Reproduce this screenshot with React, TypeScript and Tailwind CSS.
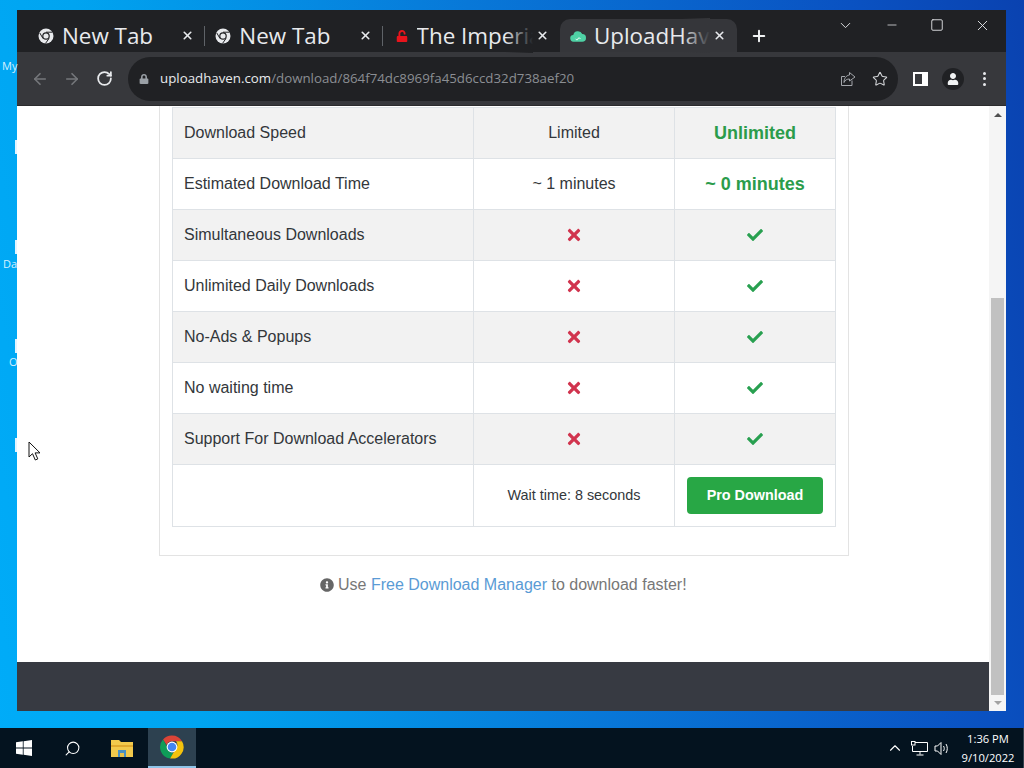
import React from 'react';
import { ArrowLeft, ArrowRight, RotateCw, Star, Plus, X, Minus, Square, ChevronDown, ChevronUp, Search } from 'lucide-react';
import { FaTimes, FaCheck, FaInfoCircle, FaLock, FaUnlock, FaUser } from 'react-icons/fa';

const rows = [
    'Simultaneous Downloads',
    'Unlimited Daily Downloads',
    'No-Ads & Popups',
    'No waiting time',
    'Support For Download Accelerators',
];

function ChromeGlyph() {
    return (
        <svg width="16" height="16" viewBox="0 0 16 16" className="shrink-0">
            <circle cx="8" cy="8" r="7.5" fill="#e8eaed" />
            <circle cx="8" cy="8" r="3.8" fill="#202124" />
            <circle cx="8" cy="8" r="2.6" fill="#e8eaed" />
            <path d="M8 4.2h6.4M5 10.5 1.8 5M11 10.5 7.5 15.4" stroke="#202124" strokeWidth="1" />
        </svg>
    );
}

function ChromeLogo() {
    return (
        <svg width="24" height="24" viewBox="0 0 24 24">
            <path d="M12 0.5a11.5 11.5 0 0 1 10 5.8H12a5.8 5.8 0 0 0-5.4 3.6L3 4.6A11.5 11.5 0 0 1 12 0.5Z" fill="#db4437" />
            <path d="M3 4.6l4 6.9a5.8 5.8 0 0 0 6.5 6.2l-3.4 5.9A11.5 11.5 0 0 1 3 4.6Z" fill="#0f9d58" />
            <path d="M22 6.300a11.500 11.500 0 0 1-11.900 17.100l5-8.700A5.800 5.800 0 0 0 16 6.300Z" fill="#f4c20d" />
            <circle cx="12" cy="12" r="5.400" fill="#fff" />
            <circle cx="12" cy="12" r="4.300" fill="#4285f4" />
        </svg>
    );
}

function Tab({ title, icon, active, divider }: { title: string; icon: React.ReactNode; active?: boolean; divider?: boolean }) {
    return (
        <div className={`relative w-[177.3px] h-[33px] shrink-0 flex items-center pl-[10px] pr-[11px] ${active ? 'bg-[#35363a] rounded-t-[10px]' : ''}`}>
            <span className="w-[16px] flex justify-center shrink-0">{icon}</span>
            <div className="relative ml-[8px] w-[116px] overflow-hidden whitespace-nowrap font-['Open_Sans',sans-serif] text-[22.4px] leading-[35px] text-[#e8eaed]">
                {title}
                {title.length > 7 && (
                    <div className={`absolute right-0 top-0 h-full w-[28px] bg-gradient-to-r from-transparent ${active ? 'to-[#35363a]' : 'to-[#202124]'}`} />
                )}
            </div>
            <X size={13} strokeWidth={3} color="#e8eaed" className="ml-auto shrink-0" />
            {divider && <div className="absolute right-0 top-[7px] h-[20px] w-px bg-[#5f6368]" />}
        </div>
    );
}

function TabStrip() {
    return (
        <div className="h-[42px] bg-[#202124] flex items-end pl-[11px] shrink-0">
            <Tab title="New Tab" icon={<ChromeGlyph />} divider />
            <Tab title="New Tab" icon={<ChromeGlyph />} divider />
            <Tab title="The Imperial" icon={<FaUnlock size={12} color="#e8141c" className="ml-[3px]" />} />
            <Tab
                title="UploadHaven"
                active
                icon={
                    <svg width="17" height="14" viewBox="0 0 17 14">
                        <path d="M4 13a3.500 3.500 0 0 1-.5-7A5 5 0 0 1 13 5a4 4 0 0 1 0 8Z" fill="#4fd1a5" />
                        <path d="M6 10c1 1.500 2 1.500 2.500 0s1.500-1.500 2.500 0" stroke="#fff" strokeWidth="1" fill="none" />
                    </svg>
                }
            />
            <div className="h-[33px] flex items-center ml-[13px]">
                <Plus size={18} strokeWidth={2.6} color="#f1f3f4" />
            </div>
            <div className="ml-auto self-start flex items-center h-[30px] text-[#e8eaed]">
                <ChevronDown size={17} strokeWidth={1.3} className="mr-[31px]" />
                <Minus size={14} strokeWidth={1.300} className="mr-[31px]" />
                <Square size={14} strokeWidth={1.500} className="mr-[30px]" />
                <X size={17} strokeWidth={1.300} className="mr-[15px]" />
            </div>
        </div>
    );
}

function Toolbar() {
    return (
        <div className="h-[54px] bg-[#37383c] flex items-center shrink-0 border-b border-[#2b2b2d]">
            <ArrowLeft size={18} strokeWidth={2.200} color="#75777b" className="ml-[14px]" />
            <ArrowRight size={18} strokeWidth={2.200} color="#75777b" className="ml-[14px]" />
            <RotateCw size={17} strokeWidth={2.500} color="#e8eaed" className="ml-[15px]" />
            <div className="ml-[15px] w-[770px] h-[44px] rounded-full bg-[#202124] flex items-center">
                <FaLock size={10} color="#9aa0a6" className="ml-[11px]" />
                <span className="ml-[11px] font-['Open_Sans',sans-serif] text-[13.3px] text-[#e8eaed]">uploadhaven.com</span>
                <span className="font-['Open_Sans',sans-serif] text-[13.3px] text-[#8b8e93]">/download/864f74dc8969fa45d6ccd32d738aef20</span>
                <svg width="16" height="16" viewBox="0 0 16 16" fill="none" stroke="#a3a6ab" strokeWidth="1" className="ml-auto">
                    <path d="M12 9.500V14.500H1.500V5.500H5" />
                    <path d="M9.500 1.500 15 6 9.500 10V8C7 8 5 9 4 11.500 4 7.500 6 4.500 9.500 4Z" />
                </svg>
                <Star size={16} strokeWidth={1.600} color="#d3d5d8" className="ml-[16px] mr-[10px]" />
            </div>
            <div className="ml-[15px] w-[15px] h-[14px] bg-white flex">
                <div className="w-[7px] h-[10px] mt-[2px] ml-[2px] bg-[#37383c]" />
            </div>
            <div className="ml-[14px] w-[22px] h-[22px] rounded-full bg-[#202124] flex items-center justify-center">
                <FaUser size={12} color="#f1f3f4" />
            </div>
            <div className="ml-[19px] flex flex-col gap-[2.500px]">
                <div className="w-[3px] h-[3px] rounded-full bg-[#e8eaed]" />
                <div className="w-[3px] h-[3px] rounded-full bg-[#e8eaed]" />
                <div className="w-[3px] h-[3px] rounded-full bg-[#e8eaed]" />
            </div>
        </div>
    );
}

function ComparisonTable() {
    return (
        <table className="w-[663px] table-fixed border-collapse border border-[#dee2e6] text-[16px] text-[#33373b]">
            <colgroup>
                <col className="w-[301px]" />
                <col className="w-[201px]" />
                <col className="w-[161px]" />
            </colgroup>
            <tbody>
                <tr className="h-[51px] bg-[#f2f2f2]">
                    <td className="border border-[#dee2e6] pl-[11px]">Download Speed</td>
                    <td className="border border-[#dee2e6] text-center">Limited</td>
                    <td className="border border-[#dee2e6] text-center text-[18px] font-bold text-[#2b9c4b]">Unlimited</td>
                </tr>
                <tr className="h-[51px]">
                    <td className="border border-[#dee2e6] pl-[11px]">Estimated Download Time</td>
                    <td className="border border-[#dee2e6] text-center">~ 1 minutes</td>
                    <td className="border border-[#dee2e6] text-center text-[18px] font-bold text-[#2b9c4b]">~ 0 minutes</td>
                </tr>
                {rows.map((row, i) => (
                    <tr key={row} className={`h-[51px] ${i % 2 === 0 ? 'bg-[#f2f2f2]' : ''}`}>
                        <td className="border border-[#dee2e6] pl-[11px]">{row}</td>
                        <td className="border border-[#dee2e6]">
                            <FaTimes size={18} color="#d1344e" className="mx-auto" />
                        </td>
                        <td className="border border-[#dee2e6]">
                            <FaCheck size={16} color="#28a050" className="mx-auto" />
                        </td>
                    </tr>
                ))}
                <tr className="h-[62px]">
                    <td className="border border-[#dee2e6]"></td>
                    <td className="border border-[#dee2e6] text-center text-[14.400px]">Wait time: 8 seconds</td>
                    <td className="border border-[#dee2e6] text-center">
                        <button className="w-[136px] h-[37px] rounded-[4px] bg-[#28a745] text-white text-[14.400px] font-bold">Pro Download</button>
                    </td>
                </tr>
            </tbody>
        </table>
    );
}

function Page() {
    return (
        <div className="flex-1 flex min-h-0">
            <div className="w-[972px] bg-white flex flex-col font-['Liberation_Sans',sans-serif]">
                <div className="ml-[142px] w-[690px] border-x border-b border-[#e3e3e3] pl-[12px] pt-[1px] pb-[28px]">
                    <ComparisonTable />
                </div>
                <div className="mt-[19px] ml-[303px] flex items-center h-[20px] text-[16px] text-[#777]">
                    <FaInfoCircle size={14} color="#666" className="mr-[4px]" />
                    <span>Use&nbsp;</span>
                    <span className="text-[#5a9bd5]">Free Download Manager</span>
                    <span>&nbsp;to download faster!</span>
                </div>
                <div className="mt-auto h-[49px] bg-[#373a42]" />
            </div>
            <div className="w-[17px] bg-[#f5f5f5] flex flex-col items-center">
                <div className="h-[17px] flex items-center justify-center">
                    <div className="w-0 h-0 border-x-[4px] border-x-transparent border-b-[4px] border-b-[#505050]" />
                </div>
                <div className="mt-[175px] w-[13px] h-[397px] bg-[#c1c1c1]" />
                <div className="mt-auto h-[16px] flex items-center justify-center">
                    <div className="w-0 h-0 border-x-[4px] border-x-transparent border-t-[4px] border-t-[#a3a3a3]" />
                </div>
            </div>
        </div>
    );
}

function Taskbar() {
    return (
        <div className="mt-auto h-[40px] bg-[#04131f] flex items-center font-['Open_Sans',sans-serif] shrink-0">
            <svg width="16" height="16" viewBox="0 0 16 16" fill="#fff" className="ml-[16px]">
                <path d="M0 2.300 6.800 1.300V7.600H0ZM7.600 1.200 16 0V7.600H7.600ZM0 8.400H6.800V14.700L0 13.700ZM7.600 8.400H16V16L7.600 14.800Z" />
            </svg>
            <Search size={17} strokeWidth={1.500} color="#fff" className="ml-[32px] -scale-x-100" />
            <svg width="22" height="18" viewBox="0 0 22 18" className="ml-[30px]">
                <path d="M0 1h8l2 2h12v15H0Z" fill="#f2c94c" />
                <path d="M0 6h22v2H0Z" fill="#e0a92e" />
                <rect x="7" y="11" width="8" height="7" fill="#4a90c2" />
                <rect x="9" y="14" width="4" height="4" fill="#e8c14a" />
            </svg>
            <div className="ml-[15px] w-[48px] h-[40px] bg-[#2d4150] border-b-2 border-[#8fc4e8] flex items-center justify-center">
                <ChromeLogo />
            </div>
            <ChevronUp size={18} strokeWidth={1.500} color="#fff" className="ml-[690px]" />
            <svg width="17" height="15" viewBox="0 0 17 15" fill="none" stroke="#fff" strokeWidth="1" className="ml-[7px]">
                <path d="M4 1.500h12.500v9H1.500V5M9 10.500v3M5.500 14h7" />
                <rect x="0.500" y="0.500" width="3.500" height="3.500" />
            </svg>
            <svg width="16" height="15" viewBox="0 0 16 15" fill="none" stroke="#fff" strokeWidth="1" className="ml-[6px]">
                <path d="M1 5h2.500L7 1.500v12L3.500 10H1ZM9.500 5c1 1.500 1 3.500 0 5M12 3c1.700 2.500 1.700 6.500 0 9" />
            </svg>
            <div className="ml-[11px] w-[54px] text-center text-[11.2px] leading-[19px] text-white">
                <div>1:36 PM</div>
                <div>9/10/2022</div>
            </div>
            <div className="ml-[8px] h-[40px] w-px bg-[#34424d]" />
        </div>
    );
}

export default function App() {
    return (
        <div className="relative w-[1024px] h-[768px] overflow-hidden flex flex-col bg-[linear-gradient(80deg,#00acf8_0%,#00a4f0_18%,#0878d8_52%,#0a52c2_85%,#0a42b0_100%)]">
            <div className="absolute left-[2px] top-[60px] font-['Open_Sans',sans-serif] text-[11px] leading-none text-[#d5f0ff]">My</div>
            <div className="absolute left-[3px] top-[258px] font-['Open_Sans',sans-serif] text-[11px] leading-none text-[#d5f0ff]">Da</div>
            <div className="absolute left-[9px] top-[356px] font-['Open_Sans',sans-serif] text-[11px] leading-none text-[#d5f0ff]">O</div>
            <div className="absolute left-[15px] top-[140px] w-[2px] h-[14px] bg-[#e4f4ff]" />
            <div className="absolute left-[15px] top-[240px] w-[2px] h-[14px] bg-[#e4f4ff]" />
            <div className="absolute left-[15px] top-[339px] w-[2px] h-[14px] bg-[#e4f4ff]" />
            <div className="absolute left-[15px] top-[438px] w-[2px] h-[14px] bg-[#e4f4ff]" />

            <div className="ml-[17px] mt-[10px] w-[989px] h-[701px] flex flex-col">
                <TabStrip />
                <Toolbar />
                <Page />
            </div>
            <Taskbar />

            <svg width="14" height="21" viewBox="0 0 14 21" className="absolute left-[28px] top-[441px]">
                <path d="M1 1v15l3.500-3.300 2.800 6.300 2.500-1.100-2.700-6H12Z" fill="#fff" stroke="#111" strokeWidth="1" />
            </svg>
        </div>
    );
}
